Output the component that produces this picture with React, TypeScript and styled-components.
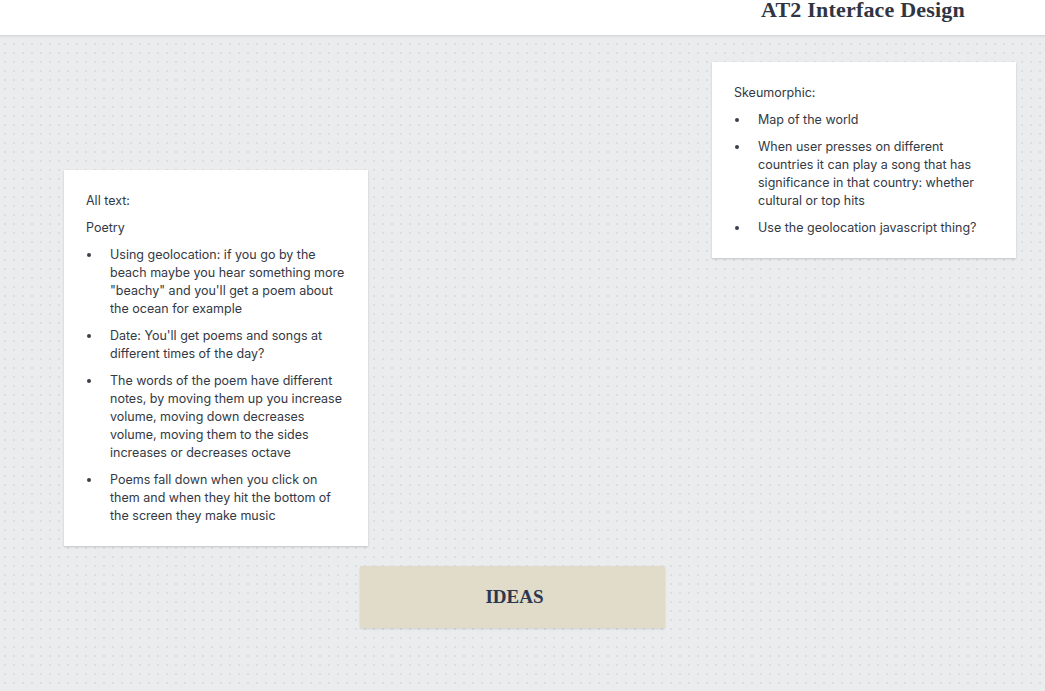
import React from 'react'
import styled, { createGlobalStyle } from 'styled-components'

const GlobalStyle = createGlobalStyle`
  html, body {
    margin: 0;
    padding: 0;
    width: 1045px;
    height: 691px;
    overflow: hidden;
    background: #ebecee;
  }
`

interface CardItem {
  heading: string[]
  bullets: string[]
  x: number
  y: number
}

const cards: CardItem[] = [
  {
    heading: ['All text:', 'Poetry'],
    bullets: [
      'Using geolocation: if you go by the beach maybe you hear something more "beachy" and you\'ll get a poem about the ocean for example',
      "Date: You'll get poems and songs at different times of the day?",
      'The words of the poem have different notes, by moving them up you increase volume, moving down decreases volume, moving them to the sides increases or decreases octave',
      'Poems fall down when you click on them and when they hit the bottom of the screen they make music',
    ],
    x: 64,
    y: 170,
  },
  {
    heading: ['Skeumorphic:'],
    bullets: [
      'Map of the world',
      'When user presses on different countries it can play a song that has significance in that country: whether cultural or top hits',
      'Use the geolocation javascript thing?',
    ],
    x: 712,
    y: 62,
  },
]

const Page = styled.div`
  display: flex;
  flex-direction: column;
  width: 1045px;
  height: 691px;
`

const Header = styled.header`
  height: 35px;
  flex-shrink: 0;
  background: #ffffff;
  border-bottom: 1px solid #d6d8dc;
  box-shadow: 0 1px 2px rgba(0, 0, 0, 0.06);
  display: flex;
  justify-content: flex-end;
  padding-right: 80px;
  position: relative;
  z-index: 1;
`

const Title = styled.h1`
  margin: 0;
  font-family: 'Liberation Serif', 'DejaVu Serif', serif;
  font-weight: 700;
  font-size: 22px;
  line-height: 20px;
  color: #2f3542;
  letter-spacing: 0.2px;
`

const Canvas = styled.main`
  flex: 1;
  position: relative;
  background-color: #ebecee;
  background-image: radial-gradient(circle at 1px 1px, #dcdde0 1px, transparent 1.2px);
  background-size: 9px 9px;
  background-position: -5px -2px;
`

const Note = styled.div<{ $x: number; $y: number }>`
  position: absolute;
  left: ${({ $x }) => $x}px;
  top: ${({ $y }) => $y - 36}px;
  width: 304px;
  box-sizing: border-box;
  padding: 22px 22px 12px;
  background: #ffffff;
  box-shadow: 0 1px 2px rgba(0, 0, 0, 0.18);
  font-family: Inter, 'Noto Sans', sans-serif;
  font-size: 12.5px;
  line-height: 18px;
  color: #333944;
`

const Para = styled.p`
  margin: 0 0 9px;
`

const BulletList = styled.ul`
  margin: 0;
  padding-left: 24px;
  list-style: none;
`

const Bullet = styled.li`
  position: relative;
  margin-bottom: 9px;

  &::before {
    content: '';
    position: absolute;
    left: -23px;
    top: 7px;
    width: 4px;
    height: 4px;
    border-radius: 50%;
    background: #3a404b;
  }
`

const Frame = styled.div`
  position: absolute;
  left: 360px;
  top: 530px;
  width: 305px;
  height: 62px;
  background: #e1dbc9;
  box-shadow: 0 1px 2px rgba(0, 0, 0, 0.12);
  display: flex;
  align-items: center;
  justify-content: center;
  padding-left: 4px;
  box-sizing: border-box;
  font-family: 'Liberation Serif', 'DejaVu Serif', serif;
  font-weight: 700;
  font-size: 19px;
  color: #2b3850;
`

export default function App() {
  return (
    <Page>
      <GlobalStyle />
      <Header>
        <Title>AT2 Interface Design</Title>
      </Header>
      <Canvas>
        {cards.map(card => (
          <Note key={card.heading[0]} $x={card.x} $y={card.y}>
            {card.heading.map(h => (
              <Para key={h}>{h}</Para>
            ))}
            <BulletList>
              {card.bullets.map(b => (
                <Bullet key={b}>{b}</Bullet>
              ))}
            </BulletList>
          </Note>
        ))}
        <Frame>IDEAS</Frame>
      </Canvas>
    </Page>
  )
}
